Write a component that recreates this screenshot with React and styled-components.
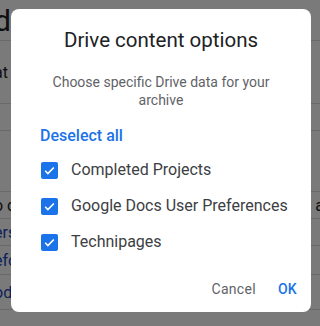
import styled, { createGlobalStyle } from "styled-components";

const Global = createGlobalStyle`
  html, body {
    margin: 0;
    padding: 0;
    width: 320px;
    height: 326px;
    overflow: hidden;
    font-family: Roboto, "Liberation Sans", sans-serif;
  }
`;

const Page = styled.div`
  position: relative;
  width: 320px;
  height: 326px;
  background: #fff;
  overflow: hidden;
`;

const BackRow = styled.div`
  height: ${({ h }) => h}px;
  border-bottom: 1px solid #dadce0;
  display: flex;
  align-items: center;
  justify-content: space-between;
  font-size: ${({ big }) => (big ? 30 : 16)}px;
  color: ${({ link }) => (link ? "#1a47b8" : "#202124")};
  margin-left: -6px;
  margin-right: -4px;
`;

const Scrim = styled.div`
  position: absolute;
  inset: 0;
  background: rgba(0, 0, 0, 0.52);
`;

const Dialog = styled.div`
  position: absolute;
  left: 11px;
  top: 9px;
  width: 300px;
  height: 303px;
  box-sizing: border-box;
  background: #fff;
  border-radius: 8px;
  padding: 19px 14px 0 29px;
  display: flex;
  flex-direction: column;
`;

const Title = styled.h2`
  margin: 0 0 0 -15px;
  text-align: center;
  font-size: 20.5px;
  font-weight: 400;
  color: #202124;
  line-height: 24px;
`;

const Sub = styled.p`
  margin: 21px 0 0 -15px;
  text-align: center;
  font-size: 14px;
  line-height: 18px;
  color: #5f6368;
  padding: 0 20px;
`;

const Deselect = styled.div`
  margin-top: 17px;
  font-size: 16px;
  font-weight: 500;
  color: #1a73e8;
  line-height: 20px;
`;

const List = styled.div`
  margin-top: 14px;
  display: flex;
  flex-direction: column;
  gap: 16px;
`;

const Item = styled.label`
  display: flex;
  align-items: center;
  gap: 13px;
  font-size: 16px;
  color: #3c4043;
  line-height: 20px;
  padding-left: 1px;
`;

const Box = styled.span`
  width: 17px;
  height: 17px;
  border-radius: 2px;
  background: #1a73e8;
  display: flex;
  align-items: center;
  justify-content: center;
  flex-shrink: 0;
`;

const Actions = styled.div`
  margin-top: auto;
  margin-bottom: 14px;
  display: flex;
  justify-content: flex-end;
  gap: 22px;
`;

const Btn = styled.span`
  font-size: 14px;
  font-weight: ${({ primary }) => (primary ? 500 : 400)};
  color: ${({ primary }) => (primary ? "#1a73e8" : "#5f6368")};
  line-height: 18px;
  letter-spacing: 0.3px;
`;

const Check = () => (
  <svg width="13" height="13" viewBox="0 0 24 24">
    <path d="M4 12.5l5 5L20 6.5" fill="none" stroke="#fff" strokeWidth="3" />
  </svg>
);

const items = ["Completed Projects", "Google Docs User Preferences", "Technipages"];

export default function App() {
  return (
    <Page>
      <Global />
      <BackRow h={40} big>
        <span>d</span>
        <span />
      </BackRow>
      <BackRow h={62}>
        <span>at</span>
      </BackRow>
      <BackRow h={26} />
      <BackRow h={60}>
        <span />
      </BackRow>
      <BackRow h={26}>
        <span>o c</span>
        <span>a</span>
      </BackRow>
      <BackRow h={26} link>
        <span>ers</span>
      </BackRow>
      <BackRow h={28} link>
        <span>efo</span>
      </BackRow>
      <BackRow h={34} link>
        <span>od</span>
      </BackRow>
      <Scrim />
      <Dialog>
        <Title>Drive content options</Title>
        <Sub>Choose specific Drive data for your archive</Sub>
        <Deselect>Deselect all</Deselect>
        <List>
          {items.map((t) => (
            <Item key={t}>
              <Box>
                <Check />
              </Box>
              {t}
            </Item>
          ))}
        </List>
        <Actions>
          <Btn>Cancel</Btn>
          <Btn primary>OK</Btn>
        </Actions>
      </Dialog>
    </Page>
  );
}
